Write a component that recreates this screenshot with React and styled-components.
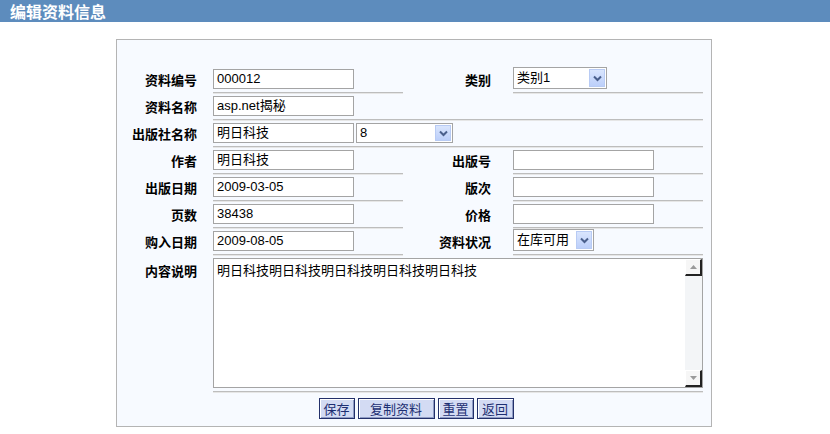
import React from 'react';
import styled, { createGlobalStyle } from 'styled-components';

const GlobalStyle = createGlobalStyle`
	html, body {
		margin: 0;
		padding: 0;
		background: #ffffff;
		font-family: "Liberation Sans", "Noto Sans CJK SC", Arial, sans-serif;
		font-size: 13px;
		color: #000;
	}
`;

const TitleBar = styled.div`
	height: 22px;
	background: #5d8cbd;
	color: #ffffff;
	font-weight: bold;
	font-size: 16px;
	line-height: 22px;
	padding-left: 10px;
	font-family: "Noto Sans CJK SC", sans-serif;
`;

const Panel = styled.div`
	width: 594px;
	margin: 17px 0 0 116px;
	border: 1px solid #b4b4b4;
	background: #f7faff;
	padding-top: 26px;
`;

const FormGrid = styled.div`
	display: grid;
	grid-template-columns: 96px 190px 110px 190px;
	grid-template-rows: repeat(7, 27px) 137px 34px;
`;

const Label = styled.div`
	display: flex;
	justify-content: flex-end;
	align-items: ${(p) => (p.top ? 'flex-start' : 'center')};
	padding-right: ${(p) => (p.right ? 22 : 16)}px;
	padding-top: ${(p) => (p.top ? 6 : 0)}px;
	font-weight: bold;
	font-size: 13px;
	font-family: "Noto Sans CJK SC", sans-serif;
	white-space: nowrap;
`;

const Field = styled.div`
	grid-column: span ${(p) => p.span || 1};
	display: flex;
	align-items: flex-start;
	gap: 2px;
	padding-top: 3px;
	border-bottom: 1px solid #bdbdbd;
	box-shadow: 0 1px 0 #e6e6e6;
`;

const TextBox = styled.div`
	width: 141px;
	height: 20px;
	box-sizing: border-box;
	border: 1px solid #a4a4a4;
	background: #ffffff;
	padding: 0 3px;
	line-height: 18px;
	font-size: 13px;
	white-space: nowrap;
	overflow: hidden;
`;

const SelectBox = styled.div`
	width: ${(p) => p.w}px;
	height: ${(p) => p.h || 21}px;
	margin-top: ${(p) => p.mt || 0}px;
	box-sizing: border-box;
	border: 1px solid #a4a4a4;
	background: #ffffff;
	display: flex;
	align-items: stretch;
	padding: 1px;
`;

const SelectText = styled.div`
	flex: 1;
	padding-left: 2px;
	line-height: ${(p) => (p.h || 21) - 4}px;
	font-size: 13px;
	white-space: nowrap;
`;

const ArrowBtn = styled.div`
	width: 16px;
	background: linear-gradient(#d9e5fd, #bccffa);
	border: 1px solid #b8cbf4;
	box-sizing: border-box;
	display: flex;
	align-items: center;
	justify-content: center;
`;

const Memo = styled.div`
	width: 490px;
	height: 130px;
	box-sizing: border-box;
	border: 1px solid #a4a4a4;
	background: #ffffff;
	display: flex;
`;

const MemoText = styled.div`
	flex: 1;
	padding: 3px 3px;
	line-height: 16px;
	font-size: 13px;
	font-family: "Noto Sans CJK SC", sans-serif;
`;

const ScrollBar = styled.div`
	width: 17px;
	background: #f3f5f7;
	display: flex;
	flex-direction: column;
	justify-content: space-between;
`;

const ScrollBtn = styled.div`
	height: 17px;
	box-sizing: border-box;
	background: #f6f6f6;
	border-right: 2px solid #222;
	border-bottom: 2px solid #222;
	border-top: 1px solid #fff;
	border-left: 1px solid #fff;
	display: flex;
	align-items: center;
	justify-content: center;
`;

const ButtonRow = styled.div`
	grid-column: span 4;
	display: flex;
	justify-content: center;
	gap: 3px;
	box-sizing: border-box;
	padding: 6px 0 0 12px;
`;

const Button = styled.div`
	width: ${(p) => p.w}px;
	height: 21px;
	box-sizing: border-box;
	border: 1px solid #23306a;
	box-shadow: inset 1px 1px 0 #ffffff, inset -1px -1px 0 #8f9cc4;
	background: #d3dbf3;
	color: #1d2f72;
	font-size: 13px;
	font-family: "Noto Sans CJK SC", sans-serif;
	line-height: 19px;
	text-align: center;
`;

const Chevron = () => (
	<svg width="9" height="7" viewBox="0 0 9 7">
		<path d="M1 1.5 L4.5 5 L8 1.5" fill="none" stroke="#4a5f8c" strokeWidth="2" />
	</svg>
);

const Tri = ({ down }) => (
	<svg width="7" height="4" viewBox="0 0 7 4">
		<path d={down ? 'M0 0 H7 L3.5 4 Z' : 'M0 4 H7 L3.5 0 Z'} fill="#9a9a9a" />
	</svg>
);

const Select = ({ w, h, mt, children }) => (
	<SelectBox w={w} h={h} mt={mt}>
		<SelectText h={h}>{children}</SelectText>
		<ArrowBtn>
			<Chevron />
		</ArrowBtn>
	</SelectBox>
);

const App = () => {
	return (
		<>
			<GlobalStyle />
			<TitleBar>编辑资料信息</TitleBar>
			<Panel>
				<FormGrid>
					<Label>资料编号</Label>
					<Field>
						<TextBox>000012</TextBox>
					</Field>
					<Label right>类别</Label>
					<Field>
						<Select w={94} h={22} mt={-2}>类别1</Select>
					</Field>

					<Label>资料名称</Label>
					<Field span={3}>
						<TextBox>asp.net揭秘</TextBox>
					</Field>

					<Label>出版社名称</Label>
					<Field span={3}>
						<TextBox>明日科技</TextBox>
						<Select w={97} h={20}>8</Select>
					</Field>

					<Label>作者</Label>
					<Field>
						<TextBox>明日科技</TextBox>
					</Field>
					<Label right>出版号</Label>
					<Field>
						<TextBox />
					</Field>

					<Label>出版日期</Label>
					<Field>
						<TextBox>2009-03-05</TextBox>
					</Field>
					<Label right>版次</Label>
					<Field>
						<TextBox />
					</Field>

					<Label>页数</Label>
					<Field>
						<TextBox>38438</TextBox>
					</Field>
					<Label right>价格</Label>
					<Field>
						<TextBox />
					</Field>

					<Label>购入日期</Label>
					<Field>
						<TextBox>2009-08-05</TextBox>
					</Field>
					<Label right>资料状况</Label>
					<Field>
						<Select w={81} h={22} mt={-2}>在库可用</Select>
					</Field>

					<Label top>内容说明</Label>
					<Field span={3}>
						<Memo>
							<MemoText>明日科技明日科技明日科技明日科技明日科技</MemoText>
							<ScrollBar>
								<ScrollBtn>
									<Tri />
								</ScrollBtn>
								<ScrollBtn>
									<Tri down />
								</ScrollBtn>
							</ScrollBar>
						</Memo>
					</Field>

					<ButtonRow>
						<Button w={36}>保存</Button>
						<Button w={77}>复制资料</Button>
						<Button w={36}>重置</Button>
						<Button w={37}>返回</Button>
					</ButtonRow>
				</FormGrid>
			</Panel>
		</>
	);
};

export default App;
